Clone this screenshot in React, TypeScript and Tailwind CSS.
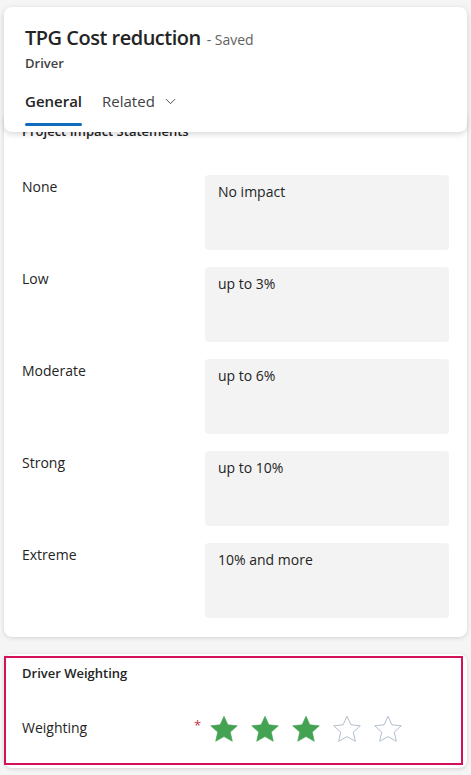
import { ChevronDown } from "lucide-react";

const rows = [
  { label: "None", value: "No impact" },
  { label: "Low", value: "up to 3%" },
  { label: "Moderate", value: "up to 6%" },
  { label: "Strong", value: "up to 10%" },
  { label: "Extreme", value: "10% and more" },
];

function Star({ filled }: { filled: boolean }) {
  return (
    <svg width="30" height="28" viewBox="0 0 30 28">
      <path
        d="M15 1.2l3.9 8.6 9.4 1-7 6.3 2 9.2L15 21.6l-8.3 4.7 2-9.2-7-6.3 9.4-1z"
        fill={filled ? "#43a352" : "#ffffff"}
        stroke={filled ? "#43a352" : "#b3bfcd"}
        strokeWidth={filled ? 0.6 : 1}
        strokeLinejoin="round"
      />
    </svg>
  );
}

export default function App() {
  return (
    <div
      className="h-[775px] overflow-hidden bg-[#f5f5f5] px-[4px] pt-[7px] text-[#242424]"
      style={{ fontFamily: '"Open Sans", "Noto Sans", sans-serif' }}
    >
      <div className="relative z-10 h-[125px] rounded-lg bg-white px-[21px] pt-[17px] shadow-[0_2px_6px_rgba(0,0,0,0.16)]">
        <div className="flex items-baseline gap-[6px]">
          <h1 className="text-[20px] font-semibold leading-[28px] tracking-[-0.5px]">TPG Cost reduction</h1>
          <span className="text-[14px] text-[#616161]">- Saved</span>
        </div>
        <div className="mt-[2px] text-[13px] font-semibold leading-[18px] text-[#424242]">Driver</div>
        <div className="mt-[18px] flex items-start gap-[20px]">
          <div className="flex flex-col">
            <span className="text-[15px] font-semibold leading-[22px]">General</span>
            <span className="mt-[11px] h-[3px] rounded-full bg-[#0f6cbd]" />
          </div>
          <div className="flex items-center gap-[7px] text-[15px] leading-[22px] text-[#424242]">
            Related
            <ChevronDown size={17} strokeWidth={1.3} className="text-[#424242]" />
          </div>
        </div>
      </div>

      <div className="-mt-[20px] rounded-lg bg-white px-[18px] pb-[19px] pt-[10px] shadow-[0_1px_4px_rgba(0,0,0,0.14)]">
        <h2 className="text-[13px] font-semibold leading-[18px]">Project Impact Statements</h2>
        <div className="mt-[35px] flex flex-col gap-[17px]">
          {rows.map((r) => (
            <div key={r.label} className="flex">
              <div className="w-[183px] pt-[2px] text-[14px] leading-[20px]">{r.label}</div>
              <div className="h-[75px] flex-1 rounded bg-[#f3f3f3] px-[13px] pt-[7px] text-[14px] leading-[20px]">
                {r.value}
              </div>
            </div>
          ))}
        </div>
      </div>

      <div className="mt-[17px] rounded-lg bg-white pb-[3px] pt-[2px] shadow-[0_1px_4px_rgba(0,0,0,0.14)]">
        <div className="mr-[4px] h-[109px] border-2 border-[#d4125a] px-[16px] pt-[6px]">
          <h2 className="text-[13px] font-semibold leading-[18px]">Driver Weighting</h2>
          <div className="mt-[33px] flex items-center">
            <div className="w-[172px] pb-[2px] text-[14px] leading-[20px]">Weighting</div>
            <span className="-mt-[6px] w-[15px] text-[13px] text-[#c4314b]">*</span>
            <div className="flex gap-[11px]">
              {[0, 1, 2, 3, 4].map((i) => (
                <Star key={i} filled={i < 3} />
              ))}
            </div>
          </div>
        </div>
      </div>
    </div>
  );
}
